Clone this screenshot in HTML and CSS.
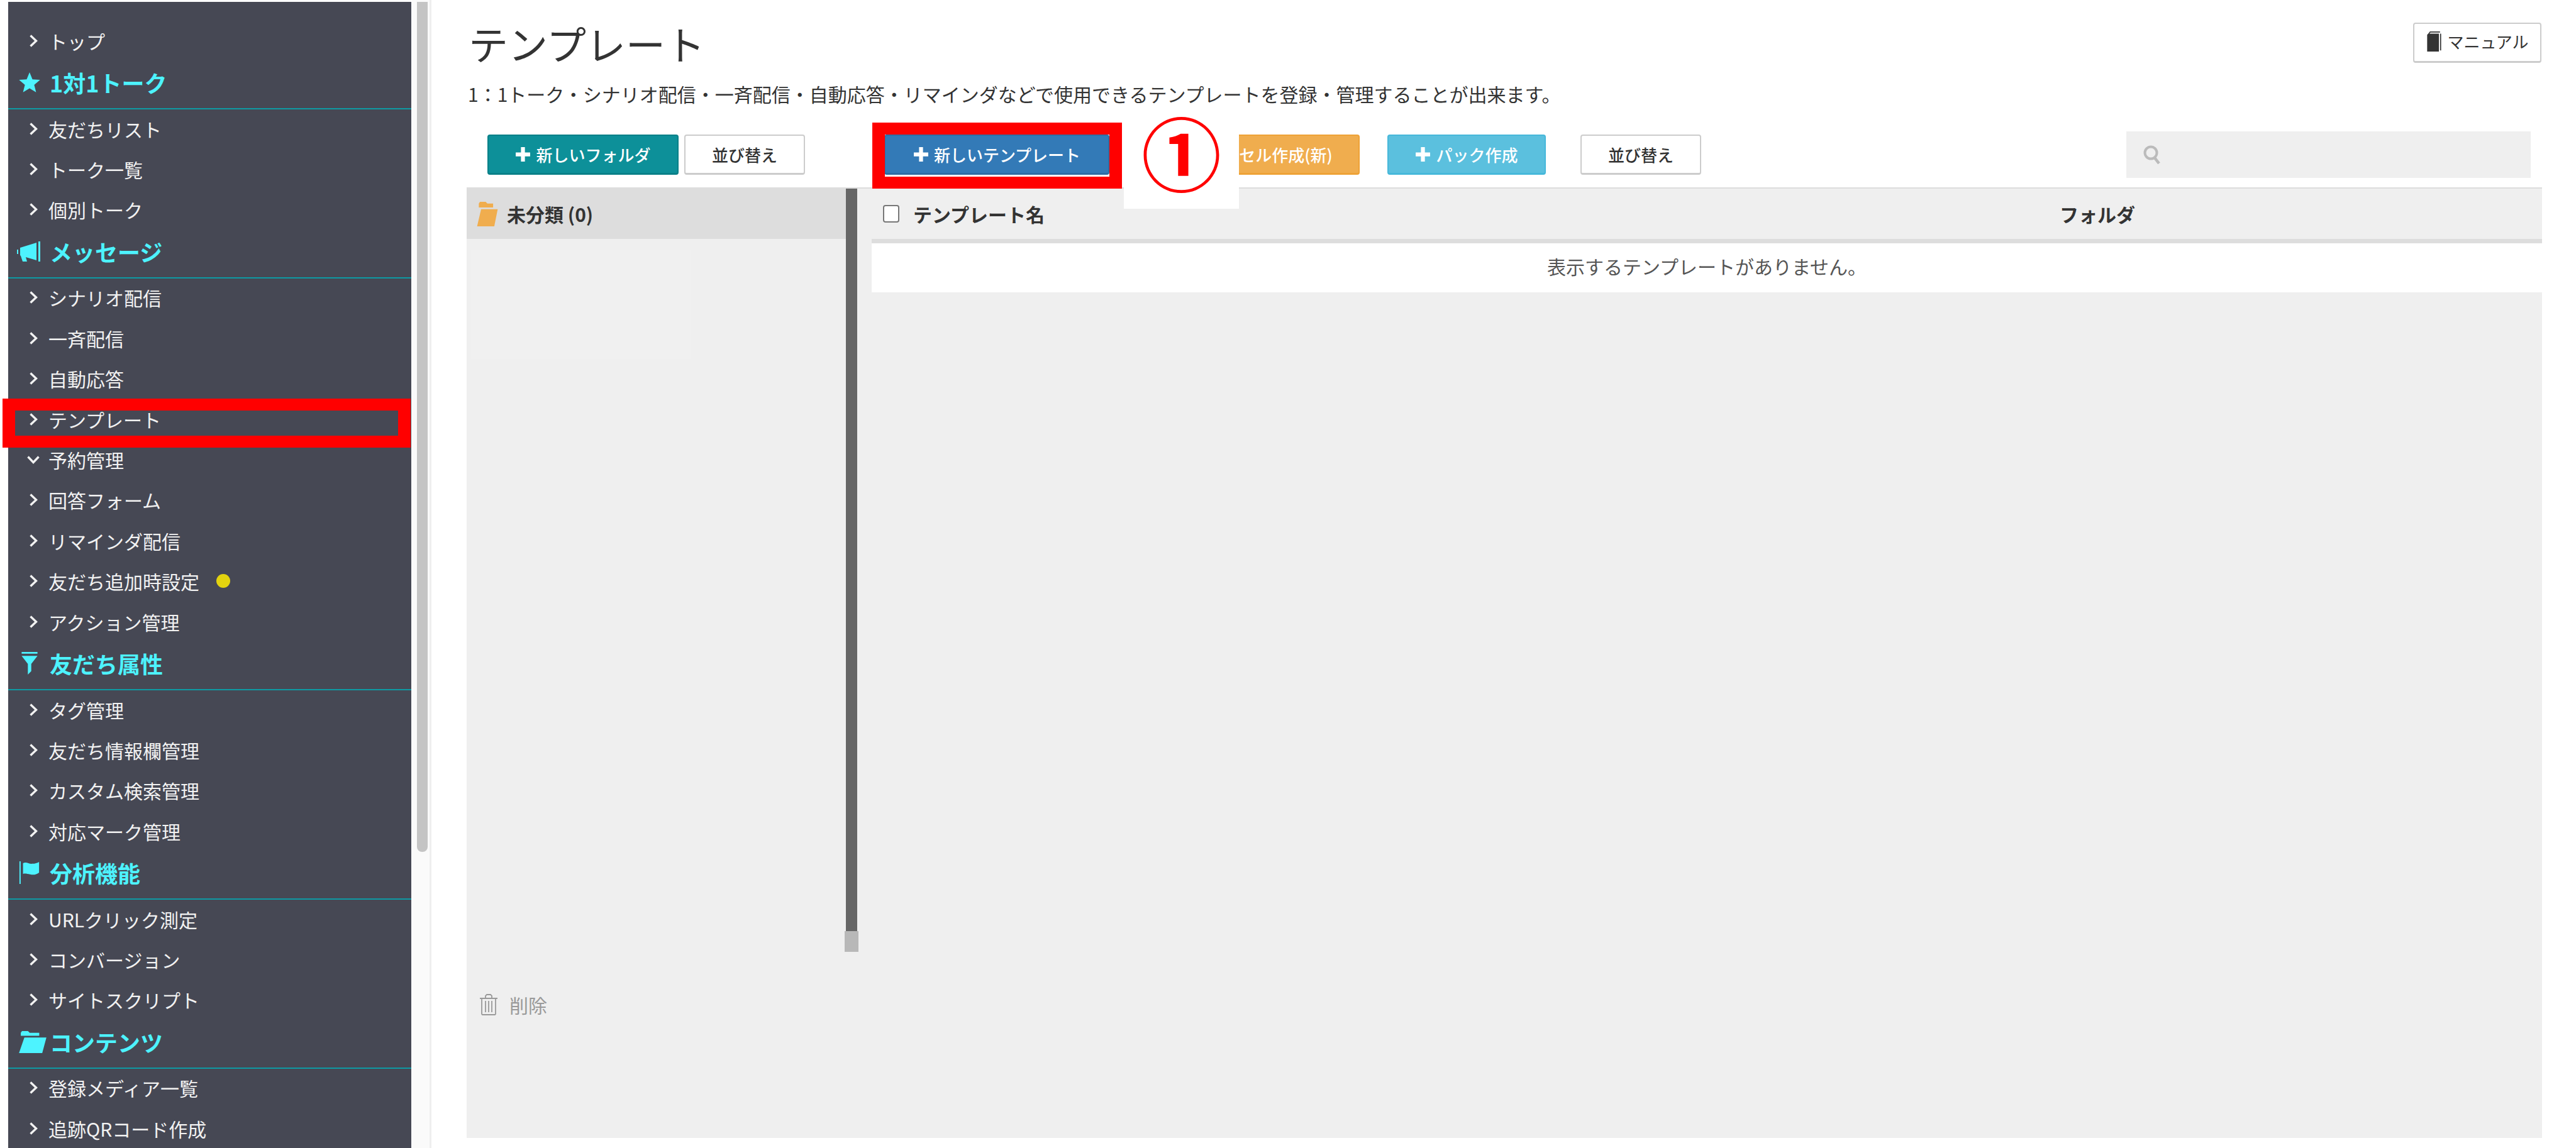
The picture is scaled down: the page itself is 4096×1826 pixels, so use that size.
FILE: index.html
```html
<!DOCTYPE html>
<html lang="ja">
<head>
    <meta charset="UTF-8">
    <title>テンプレート</title>
    <link rel="stylesheet" href="styles.css">
</head>
<body>
    <svg class="defs" aria-hidden="true">
        <symbol id="chev" viewBox="0 0 14 20"><path d="M2.500 1.500l9 8.500-9 8.500" fill="none" stroke="currentColor" stroke-width="3.400"/></symbol>
        <symbol id="chev-down" viewBox="0 0 20 14"><path d="M1.500 2.500l8.500 9 8.500-9" fill="none" stroke="currentColor" stroke-width="3.400"/></symbol>
        <symbol id="plus" viewBox="0 0 24 24"><path d="M9 1h6v8h8v6h-8v8H9v-8H1V9h8z" fill="currentColor"/></symbol>
    </svg>

    <div class="app">
        <nav class="sidebar">
            <a class="item"><svg class="chev"><use href="#chev"/></svg>トップ</a>

            <div class="head">
                <span class="head-icon"><svg viewBox="0 0 34 34"><path d="M17 1l4.600 11.200 12.100.9-9.300 7.800 3 11.900L17 26.400 6.600 32.800l3-11.900L.3 13.100l12.100-.9z"/></svg></span>1対1トーク
            </div>
            <a class="item"><svg class="chev"><use href="#chev"/></svg>友だちリスト</a>
            <a class="item"><svg class="chev"><use href="#chev"/></svg>トーク一覧</a>
            <a class="item"><svg class="chev"><use href="#chev"/></svg>個別トーク</a>

            <div class="head">
                <span class="head-icon head-icon-horn"><svg viewBox="0 0 40 34"><path d="M0 14h2v7H0zM5 11l26-8v28L14 26l2 7H9l-3-9-1-1zM34 1h3v32h-3z"/></svg></span>メッセージ
            </div>
            <a class="item"><svg class="chev"><use href="#chev"/></svg>シナリオ配信</a>
            <a class="item"><svg class="chev"><use href="#chev"/></svg>一斉配信</a>
            <a class="item"><svg class="chev"><use href="#chev"/></svg>自動応答</a>
            <a class="item item-marked"><svg class="chev"><use href="#chev"/></svg>テンプレート</a>
            <a class="item"><svg class="chev-down"><use href="#chev-down"/></svg>予約管理</a>
            <a class="item"><svg class="chev"><use href="#chev"/></svg>回答フォーム</a>
            <a class="item"><svg class="chev"><use href="#chev"/></svg>リマインダ配信</a>
            <a class="item"><svg class="chev"><use href="#chev"/></svg>友だち追加時設定<span class="dot"></span></a>
            <a class="item"><svg class="chev"><use href="#chev"/></svg>アクション管理</a>

            <div class="head">
                <span class="head-icon"><svg viewBox="0 0 30 40"><path d="M1 0h28v3H1zM1 7h28L18 21v13l-6 6V21z"/></svg></span>友だち属性
            </div>
            <a class="item"><svg class="chev"><use href="#chev"/></svg>タグ管理</a>
            <a class="item"><svg class="chev"><use href="#chev"/></svg>友だち情報欄管理</a>
            <a class="item"><svg class="chev"><use href="#chev"/></svg>カスタム検索管理</a>
            <a class="item"><svg class="chev"><use href="#chev"/></svg>対応マーク管理</a>

            <div class="head">
                <span class="head-icon"><svg viewBox="0 0 36 38"><path d="M1 0h2v38H1zM7 3c6-3 10 2 16 1 4 0 8-1 11-3v18c-5 4-10 4-15 3-5-1-8-2-12-1z"/></svg></span>分析機能
            </div>
            <a class="item"><svg class="chev"><use href="#chev"/></svg>URLクリック測定</a>
            <a class="item"><svg class="chev"><use href="#chev"/></svg>コンバージョン</a>
            <a class="item"><svg class="chev"><use href="#chev"/></svg>サイトスクリプト</a>

            <div class="head">
                <span class="head-icon head-icon-wide"><svg viewBox="0 0 46 38"><path d="M3 9V4l2-3h10l3 3h16v5zM9 12h37l-7 26H0z"/></svg></span>コンテンツ
            </div>
            <a class="item"><svg class="chev"><use href="#chev"/></svg>登録メディア一覧</a>
            <a class="item"><svg class="chev"><use href="#chev"/></svg>追跡QRコード作成</a>
        </nav>

        <div class="scrollbar"><div class="thumb"></div></div>

        <main class="main">
            <header class="page-head">
                <h1>テンプレート</h1>
                <a class="btn btn-manual">
                    <svg class="book" viewBox="0 0 26 36"><path d="M3 4l3-4h18v2H7L5 4h17v32H1V6z" fill="#333"/><path d="M24 4h2v30h-2z" fill="#333"/></svg>マニュアル
                </a>
            </header>
            <p class="desc">1：1トーク・シナリオ配信・一斉配信・自動応答・リマインダなどで使用できるテンプレートを登録・管理することが出来ます。</p>

            <div class="toolbar">
                <a class="btn btn-teal btn-folder"><svg class="plus"><use href="#plus"/></svg>新しいフォルダ</a>
                <a class="btn btn-sort btn-sort-a">並び替え</a>
                <div class="new-wrap">
                    <a class="btn btn-blue"><svg class="plus"><use href="#plus"/></svg>新しいテンプレート</a>
                    <div class="frame"></div>
                </div>
                <a class="btn btn-orange"><svg class="plus"><use href="#plus"/></svg>カルーセル作成(新)</a>
                <a class="btn btn-sky"><svg class="plus"><use href="#plus"/></svg>パック作成</a>
                <a class="btn btn-sort btn-sort-b">並び替え</a>
                <div class="search">
                    <svg viewBox="0 0 28 30"><circle cx="12" cy="12" r="9.500" fill="none" stroke="#bbb" stroke-width="4"/><path d="M18 20l7 9" stroke="#bbb" stroke-width="4.500" fill="none"/></svg>
                </div>
                <div class="step">①</div>
            </div>

            <section class="panel">
                <aside class="folders">
                    <div class="folder-row">
                        <svg class="folder-icon" viewBox="0 0 36 44"><path d="M3 11V4l2-3h10l3 3h10v7z" fill="#f0ad4e"/><path d="M7 14h29l-6 30H0z" fill="#f0ad4e"/></svg>未分類 (0)
                    </div>
                    <div class="folder-blank"></div>
                    <div class="delete">
                        <svg class="trash" viewBox="0 0 28 34" fill="none" stroke="#999" stroke-width="1.800"><path d="M0 7h28M9 7V3l2-2h6l2 2v4M3 7v25l1 1h20l1-1V7M9 11v18M14 11v18M19 11v18"/></svg>削除
                    </div>
                </aside>
                <div class="splitter"><div class="splitter-end"></div></div>
                <div class="list">
                    <div class="list-head">
                        <div class="col-name"><span class="check"></span>テンプレート名</div>
                        <div class="col-folder">フォルダ</div>
                    </div>
                    <div class="empty">表示するテンプレートがありません。</div>
                </div>
            </section>
        </main>
    </div>
</body>
</html>
```

FILE: styles.css
```css
html, body {
    margin: 0;
    padding: 0;
    height: 100%;
    overflow: hidden;
    background-color: white;
}
body {
    font-family: "Noto Sans CJK JP", "Noto Sans", sans-serif;
    font-size: 30px;
    color: #333;
}
.defs {
    display: none;
}
.app {
    display: flex;
    height: 1826px;
}

/* sidebar */
.sidebar {
    width: 641px;
    height: 1823px;
    margin: 3px 0 0 13px;
    padding-top: 31px;
    box-sizing: border-box;
    background-color: #464854;
    flex-shrink: 0;
}
.item {
    display: flex;
    align-items: center;
    box-sizing: border-box;
    height: 64.4px;
    padding: 0 0 3px 33px;
    color: #f2f2f2;
    position: relative;
}
.chev {
    width: 14px;
    height: 20px;
    margin-right: 17px;
    flex-shrink: 0;
}
.chev-down {
    width: 20px;
    height: 14px;
    margin-left: -3px;
    margin-right: 14px;
    flex-shrink: 0;
}
.item-marked::after {
    content: "";
    position: absolute;
    left: -9px;
    top: -2px;
    width: 649px;
    height: 78px;
    box-sizing: border-box;
    border: solid #f00;
    border-width: 19px 20px;
}
.dot {
    width: 22px;
    height: 22px;
    border-radius: 50%;
    background-color: #e3d30f;
    margin-left: 27px;
}
.head {
    display: flex;
    align-items: center;
    height: 75.6px;
    box-sizing: border-box;
    padding: 0 0 8px 17px;
    border-bottom: 2px solid #0e9aa3;
    color: #4df3ff;
    font-size: 36px;
    font-weight: 700;
}
.head-icon {
    display: flex;
    width: 34px;
    margin-right: 15px;
    justify-content: center;
}
.head-icon svg {
    width: 34px;
    height: 36px;
    fill: #4df3ff;
    flex-shrink: 0;
}
.head-icon-horn svg {
    width: 40px;
}
.head-icon-wide svg {
    width: 46px;
    margin-left: 10px;
}

/* page scrollbar */
.scrollbar {
    width: 31px;
    height: 1826px;
    margin-left: 1px;
    padding: 3px 4px 0 8px;
    box-sizing: border-box;
    background-color: #fafafa;
    border-right: 3px solid #eee;
    flex-shrink: 0;
}
.thumb {
    width: 17px;
    height: 1352px;
    background-color: #c4c4c4;
    border-radius: 0 0 8px 8px;
}

/* main */
.main {
    flex: 1;
    margin: 0 54px 0 56px;
    min-width: 0;
}
.page-head {
    display: flex;
    justify-content: space-between;
    align-items: flex-start;
    height: 129px;
}
h1 {
    margin: 0;
    padding: 26px 0 0 3px;
    font-size: 63px;
    font-weight: 400;
    line-height: 84px;
}
.desc {
    margin: 0;
    padding-left: 2px;
    height: 80px;
    font-size: 30px;
    line-height: 40px;
}
.btn {
    display: flex;
    align-items: center;
    justify-content: center;
    box-sizing: border-box;
    height: 64px;
    border-radius: 4px;
    border: 2px solid transparent;
    border-bottom-width: 3px;
    font-size: 26px;
    font-weight: 500;
    color: white;
}
.plus {
    width: 25px;
    height: 25px;
    margin-right: 8px;
    flex-shrink: 0;
}
.btn-manual {
    width: 204px;
    margin: 36px 1px 0 0;
    padding-bottom: 4px;
    color: #333;
    font-weight: 400;
    border-color: #ccc;
    background-color: white;
}
.book {
    width: 26px;
    height: 32px;
    margin-right: 8px;
}
.toolbar {
    display: flex;
    align-items: flex-start;
    height: 89px;
    position: relative;
}
.toolbar .btn {
    margin-top: 5px;
}
.btn-teal {
    background-color: #0d9099;
    border-color: #0a8088;
}
.btn-folder {
    width: 304px;
    margin-left: 33px;
}
.btn-sort {
    width: 192px;
    background-color: white;
    border-color: #ccc;
    color: #333;
}
.btn-sort-a {
    margin-left: 9px;
}
.btn-sort-b {
    margin-left: 55px;
}
.new-wrap {
    position: relative;
    width: 358px;
    margin-left: 126px;
    z-index: 2;
}
.btn-blue {
    width: 358px;
    background-color: #337ab7;
    border-color: #2e6da4;
}
.frame {
    position: absolute;
    left: -19px;
    right: -20px;
    top: -14px;
    height: 105px;
    box-sizing: border-box;
    border: solid #f00;
    border-width: 19px 20px;
}
.btn-orange {
    width: 346px;
    margin-left: 52px;
    background-color: #f0ad4e;
    border-color: #eea236;
}
.btn-sky {
    width: 252px;
    margin-left: 44px;
    background-color: #5bc0de;
    border-color: #46b8da;
}
.search {
    display: flex;
    align-items: center;
    width: 643px;
    height: 74px;
    margin-left: auto;
    margin-right: 18px;
    padding-left: 27px;
    box-sizing: border-box;
    background-color: #efefef;
}
.search svg {
    width: 28px;
    height: 30px;
}

/* the numbered note lies over the toolbar */
.step {
    position: absolute;
    left: 1045px;
    top: -14px;
    width: 183px;
    height: 137px;
    background-color: white;
    color: #f00;
    font-size: 127px;
    font-weight: 700;
    line-height: 90px;
    text-align: center;
    z-index: 3;
}

/* panel */
.panel {
    display: flex;
    height: 1512px;
    box-sizing: border-box;
    background-color: #efefef;
    border-top: 2px solid #ddd;
}
.folders {
    width: 603px;
    flex-shrink: 0;
    display: flex;
    flex-direction: column;
}
.folder-row {
    display: flex;
    align-items: center;
    height: 80px;
    padding-left: 15px;
    background-color: #ddd;
    font-weight: 700;
}
.folder-icon {
    width: 36px;
    height: 40px;
    margin-right: 13px;
}
.folder-blank {
    width: 349px;
    height: 173px;
    margin: 18px 0 1005px 7px;
    background-color: #f0f0f0;
}
.delete {
    display: flex;
    align-items: center;
    padding-left: 21px;
    color: #999;
}
.trash {
    width: 28px;
    height: 34px;
    margin-right: 19px;
}
.splitter {
    width: 18px;
    height: 1181px;
    background-color: #666;
    position: relative;
    flex-shrink: 0;
}
.splitter-end {
    position: absolute;
    left: -2px;
    right: -2px;
    bottom: -33px;
    height: 33px;
    background-color: #b8b8b8;
}
.list {
    flex: 1;
    margin-left: 23px;
    min-width: 0;
}
.list-head {
    display: flex;
    align-items: center;
    height: 87px;
    box-sizing: border-box;
    border-bottom: 7px solid #ddd;
    font-weight: 700;
}
.col-name {
    display: flex;
    align-items: center;
    flex: 1;
    padding-left: 18px;
}
.check {
    width: 26px;
    height: 28px;
    box-sizing: border-box;
    margin-right: 22px;
    background-color: white;
    border: 2px solid #777;
    border-radius: 4px;
}
.col-folder {
    width: 767px;
}
.empty {
    height: 78px;
    line-height: 72px;
    background-color: white;
    text-align: center;
    color: #555;
}
```
